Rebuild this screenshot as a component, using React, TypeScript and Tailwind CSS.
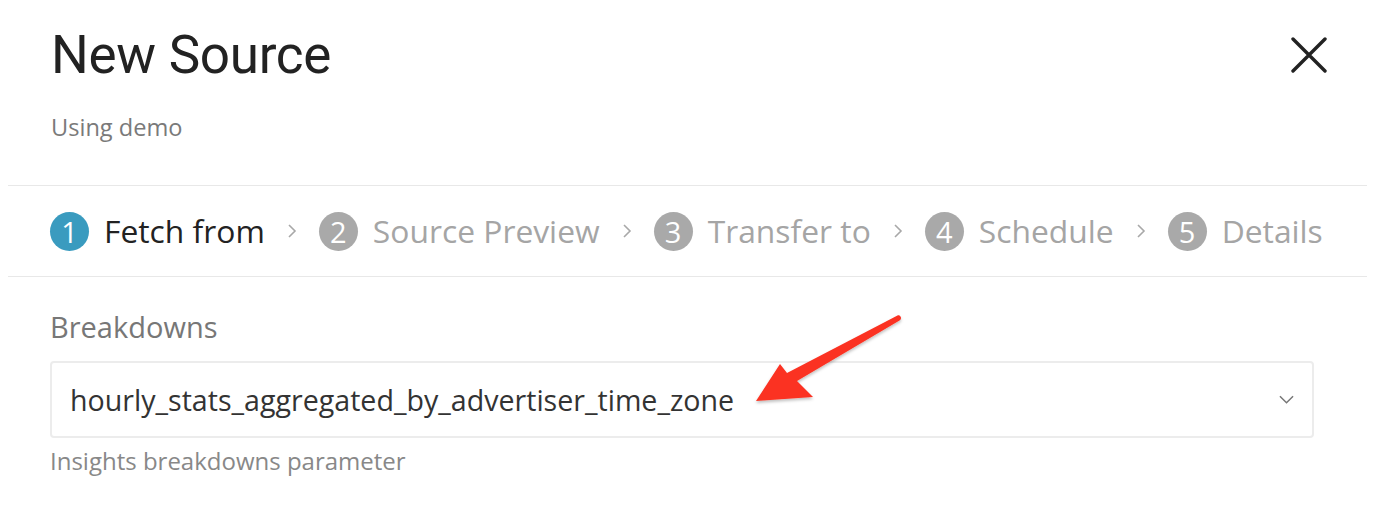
import React from 'react';

const steps = [
  { n: 1, label: 'Fetch from' },
  { n: 2, label: 'Source Preview' },
  { n: 3, label: 'Transfer to' },
  { n: 4, label: 'Schedule' },
  { n: 5, label: 'Details' },
];

const Chevron: React.FC<{ className?: string }> = ({ className }) => (
  <svg viewBox="0 0 10 16" className={className} fill="none" stroke="currentColor" strokeWidth="1.6">
    <path d="M2 2l6 6-6 6" />
  </svg>
);

const App: React.FC = () => {
  return (
    <div className="relative w-[1380px] h-[526px] bg-white pl-2 pr-[13px] font-['Open_Sans',sans-serif] overflow-hidden">
      {/* Header */}
      <div className="flex items-start justify-between pl-[43px] pr-[40px] pt-[24px]">
        <h1 className="font-['Roboto',sans-serif] text-[53px] leading-[62px] text-[#222] tracking-[-0.3px]">New Source</h1>
        <button className="mt-[13px] text-[#222]" title="Close">
          <svg viewBox="0 0 36 36" className="w-[36px] h-[36px]" fill="none" stroke="currentColor" strokeWidth="3.4" strokeLinecap="round">
            <path d="M2 2L34 34M34 2L2 34" />
          </svg>
        </button>
      </div>
      <p className="pl-[43px] mt-[26px] text-[23.6px] leading-[30px] text-[#7a7a7a]">Using demo</p>

      {/* Steps */}
      <div className="mt-[43px] border-y border-[#e8e8e8] h-[92px] flex items-center pl-[42px]">
        {steps.map((s, i) => (
          <div key={s.n} className="flex items-center">
            {i > 0 && <Chevron className="w-[10px] h-[16px] mx-[22px] text-[#a8a8a8]" />}
            <div
              className={
                'w-[39px] h-[39px] rounded-full flex items-center justify-center text-white text-[29px] leading-none ' +
                (i === 0 ? 'bg-[#3a9bbf]' : 'bg-[#a9a9a9]')
              }
            >
              {s.n}
            </div>
            <span
              className={
                'ml-[15px] text-[31.8px] leading-[40px] ' +
                (i === 0 ? 'text-[#222]' : 'text-[#a5a5a5]')
              }
            >
              {s.label}
            </span>
          </div>
        ))}
      </div>

      {/* Form */}
      <div className="pl-[42px] pr-[53px] pt-[33px]">
        <label className="block text-[29px] leading-[34px] text-[#777]">Breakdowns</label>
        <div className="mt-[17px] h-[77px] border-2 border-[#ececec] rounded-[4px] flex items-center justify-between pl-[18px] pr-[18px]">
          <span className="text-[28.6px] leading-[34px] text-[#333]">hourly_stats_aggregated_by_advertiser_time_zone</span>
          <svg viewBox="0 0 16 10" className="w-[15px] h-[10px] text-[#777]" fill="none" stroke="currentColor" strokeWidth="1.6">
            <path d="M1 1l7 7 7-7" />
          </svg>
        </div>
        <p className="mt-[8px] text-[24px] leading-[30px] text-[#888]">Insights breakdowns parameter</p>
      </div>

      {/* Annotation arrow */}
      <svg className="absolute left-0 top-0 pointer-events-none" width="1380" height="526" viewBox="0 0 1380 526">
        <defs>
          <filter id="sh" x="-20%" y="-20%" width="140%" height="140%">
            <feDropShadow dx="0" dy="2" stdDeviation="1.5" floodColor="#000" floodOpacity="0.25" />
          </filter>
        </defs>
        <path
          d="M900.5 316.5 C901.5 318 901 319.5 899.5 320.5 L797 381 L813 397 L756 401 L780 364 L787 373 L897.5 315.5 C898.5 315 899.8 315.6 900.5 316.5 Z"
          fill="#fb3222"
          filter="url(#sh)"
        />
      </svg>
    </div>
  );
};

export default App;
